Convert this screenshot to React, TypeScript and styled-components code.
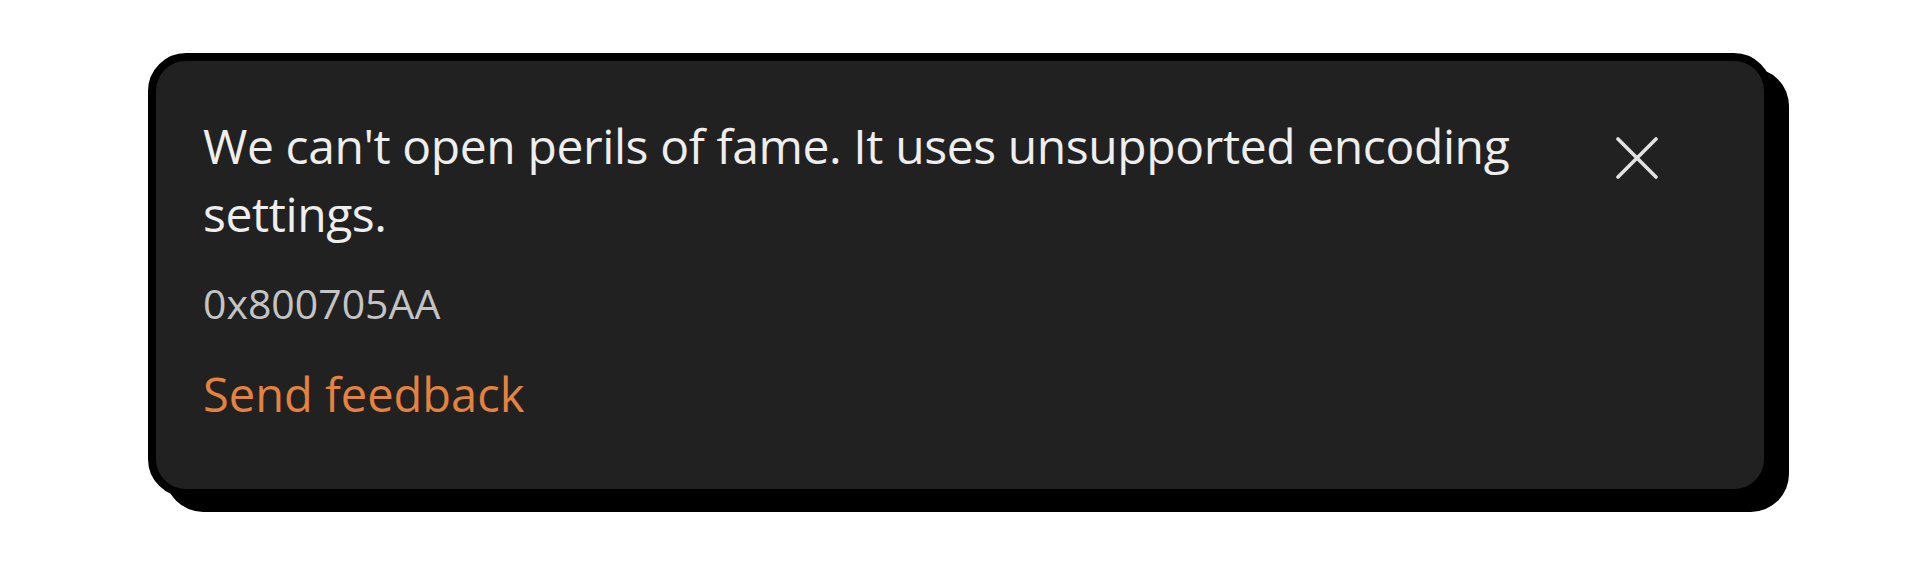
import * as React from "react";
import styled, { createGlobalStyle } from "styled-components";

const GlobalStyle = createGlobalStyle`
  html, body, #root {
    margin: 0;
    padding: 0;
    height: 100%;
    background: #ffffff;
  }
  body {
    font-family: "Open Sans", "Noto Sans", "DejaVu Sans", sans-serif;
  }
`;

const Page = styled.div`
  min-height: 100vh;
  box-sizing: border-box;
  padding: 53px 0 0 148px;
`;

const Toast = styled.div`
  width: 1624px;
  height: 444px;
  box-sizing: border-box;
  display: flex;
  align-items: flex-start;
  padding: 51px 103px 0 47px;
  background: #212121;
  border: 8px solid #000;
  border-radius: 38px;
  box-shadow: 17px 15px 0 #000;
`;

const Body = styled.div`
  flex: 1;
  display: flex;
  flex-direction: column;
  margin-right: 50px;
`;

const Message = styled.div`
  color: #eeeeee;
  font-size: 48px;
  line-height: 68px;
  letter-spacing: -0.4px;
`;

const ErrorCode = styled.div`
  margin-top: 29px;
  color: #c4c4c4;
  font-size: 41px;
  line-height: 52px;
`;

const FeedbackLink = styled.a`
  margin-top: 34px;
  color: #e4823f;
  font-size: 47px;
  line-height: 62px;
  text-decoration: none;
  cursor: pointer;
`;

const CloseButton = styled.button`
  flex: none;
  width: 48px;
  height: 48px;
  margin-top: 22px;
  padding: 0;
  border: none;
  background: transparent;
  display: flex;
  align-items: center;
  justify-content: center;
  cursor: pointer;
`;

const CloseIcon = () => (
  <svg width="42" height="42" viewBox="0 0 42 42" fill="none">
    <path
      d="M2 2 L40 40 M40 2 L2 40"
      stroke="#e2e2e2"
      strokeWidth="3.6"
      strokeLinecap="round"
    />
  </svg>
);

export default function App() {
  return (
    <Page>
      <GlobalStyle />
      <Toast>
        <Body>
          <Message>
            We can't open perils of fame. It uses unsupported encoding settings.
          </Message>
          <ErrorCode>0x800705AA</ErrorCode>
          <FeedbackLink>Send feedback</FeedbackLink>
        </Body>
        <CloseButton aria-label="Close">
          <CloseIcon />
        </CloseButton>
      </Toast>
    </Page>
  );
}
